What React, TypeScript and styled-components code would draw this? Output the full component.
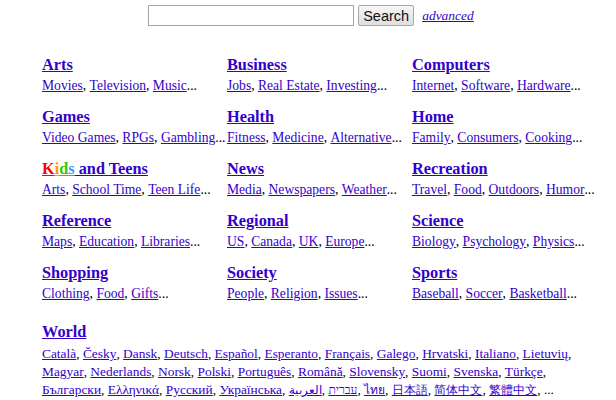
import React from "react"
import styled, { createGlobalStyle } from "styled-components"

const GlobalStyle = createGlobalStyle`
body {
  margin: 0;
  background: #fff;
  font-family: "Liberation Serif", "Times New Roman", serif;
}
`

const LINK = "#3300cc"

const Page = styled.div`
  width: 616px;
  height: 400px;
  overflow: hidden;
`

const SearchForm = styled.form`
  display: flex;
  align-items: center;
  justify-content: center;
  gap: 4px;
  padding-top: 5px;
  padding-left: 6px;
`

const SearchInput = styled.input`
  box-sizing: border-box;
  width: 206px;
  height: 21px;
  border: 1px solid #a5a5a5;
  padding: 1px 3px;
  margin: 0;
  font: 13px "Liberation Sans", Arial, sans-serif;
`

const SearchButton = styled.button`
  box-sizing: border-box;
  height: 21px;
  width: 56px;
  margin: 0;
  padding: 0;
  border: 1px solid #a8a8a8;
  border-radius: 2px;
  background: linear-gradient(#f6f6f6, #dedede);
  font: 14.5px "Liberation Sans", Arial, sans-serif;
  color: #111;
`

const Advanced = styled.a`
  margin-left: 4px;
  font-style: italic;
  font-size: 13.5px;
  color: ${LINK};
  text-decoration: underline;
`

const Directory = styled.div`
  display: grid;
  grid-template-columns: repeat(3, 185px);
  row-gap: 13px;
  padding: 29px 0 0 42px;
`

const Cell = styled.div`
  display: flex;
  flex-direction: column;
`

const Heading = styled.a`
  font-size: 16.3px;
  font-weight: bold;
  line-height: 20px;
  color: ${LINK};
  text-decoration: underline;
  align-self: flex-start;
`

const KidsHeading = styled(Heading)`
  text-decoration: none;
`

const Letter = styled.span<{ $c: string }>`
  color: ${(p) => p.$c};
  text-decoration: underline;
`

const Subs = styled.div`
  margin-top: 3px;
  font-size: 13.6px;
  line-height: 16px;
  height: 16px;
  color: #000;
  white-space: nowrap;
`

const SubLink = styled.a<{ $small?: boolean }>`
  color: ${LINK};
  text-decoration: underline;
  unicode-bidi: isolate;
  font-size: ${(p) => (p.$small ? "12px" : "inherit")};
`

const World = styled.div`
  padding: 20px 0 0 42px;
`

const LangLine = styled.div<{ $first?: boolean }>`
  margin-top: ${(p) => (p.$first ? "3px" : "0")};
  font-size: 13.4px;
  line-height: 18px;
  height: 18px;
  white-space: nowrap;
  direction: ltr;
`

const categories: [string, string[]][] = [
  ["Arts", ["Movies", "Television", "Music"]],
  ["Business", ["Jobs", "Real Estate", "Investing"]],
  ["Computers", ["Internet", "Software", "Hardware"]],
  ["Games", ["Video Games", "RPGs", "Gambling"]],
  ["Health", ["Fitness", "Medicine", "Alternative"]],
  ["Home", ["Family", "Consumers", "Cooking"]],
  ["Kids and Teens", ["Arts", "School Time", "Teen Life"]],
  ["News", ["Media", "Newspapers", "Weather"]],
  ["Recreation", ["Travel", "Food", "Outdoors", "Humor"]],
  ["Reference", ["Maps", "Education", "Libraries"]],
  ["Regional", ["US", "Canada", "UK", "Europe"]],
  ["Science", ["Biology", "Psychology", "Physics"]],
  ["Shopping", ["Clothing", "Food", "Gifts"]],
  ["Society", ["People", "Religion", "Issues"]],
  ["Sports", ["Baseball", "Soccer", "Basketball"]],
]

const languages = [
  ["Català", "Česky", "Dansk", "Deutsch", "Español", "Esperanto", "Français", "Galego", "Hrvatski", "Italiano", "Lietuvių"],
  ["Magyar", "Nederlands", "Norsk", "Polski", "Português", "Română", "Slovensky", "Suomi", "Svenska", "Türkçe"],
  ["Български", "Ελληνικά", "Русский", "Українська", "العربية", "עברית", "ไทย", "日本語", "简体中文", "繁體中文"],
]

const smallScripts = ["ไทย", "日本語", "简体中文", "繁體中文", "العربية", "עברית"]

const SubList = ({ items }: { items: string[] }) => (
  <Subs>
    {items.map((s, i) => (
      <React.Fragment key={s}>
        <SubLink href="#">{s}</SubLink>
        {i < items.length - 1 ? ", " : "..."}
      </React.Fragment>
    ))}
  </Subs>
)

export default function App() {
  return (
    <Page>
      <GlobalStyle />
      <SearchForm onSubmit={(e) => e.preventDefault()}>
        <SearchInput type="text" />
        <SearchButton type="submit">Search</SearchButton>
        <Advanced href="#">advanced</Advanced>
      </SearchForm>

      <Directory>
        {categories.map(([name, subs]) => (
          <Cell key={name}>
            {name === "Kids and Teens" ? (
              <KidsHeading href="#">
                <Letter $c="#ff0000">K</Letter>
                <Letter $c="#ff9900">i</Letter>
                <Letter $c="#33cc00">d</Letter>
                <Letter $c="#3399ff">s</Letter>
                <Letter $c={LINK}> and Teens</Letter>
              </KidsHeading>
            ) : (
              <Heading href="#">{name}</Heading>
            )}
            <SubList items={subs} />
          </Cell>
        ))}
      </Directory>

      <World>
        <Cell>
          <Heading href="#">World</Heading>
          {languages.map((line, li) => (
            <LangLine key={li} $first={li === 0}>
              {line.map((l, i) => (
                <React.Fragment key={l}>
                  <SubLink href="#" $small={smallScripts.includes(l)}>{l}</SubLink>
                  {i < line.length - 1 || li < languages.length - 1 ? ", " : ", ..."}
                </React.Fragment>
              ))}
            </LangLine>
          ))}
        </Cell>
      </World>
    </Page>
  )
}
